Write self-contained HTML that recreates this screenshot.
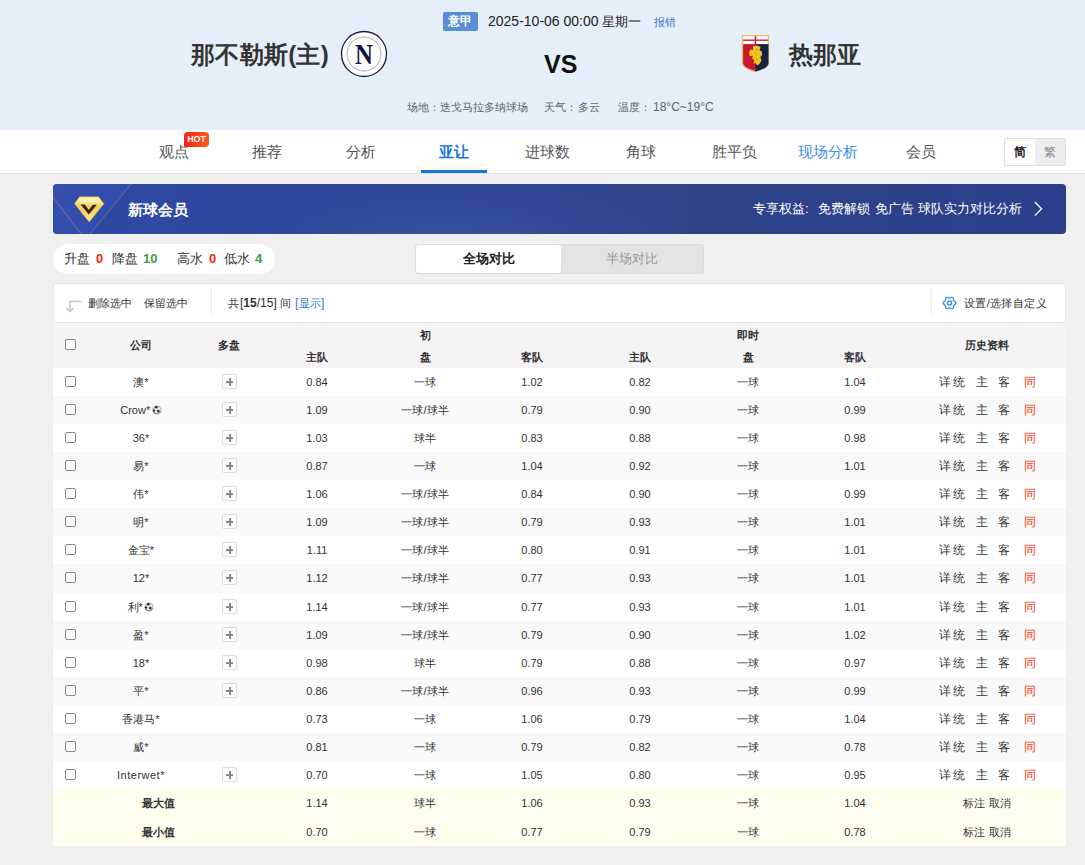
<!DOCTYPE html>
<html><head><meta charset="utf-8">
<style>
*{margin:0;padding:0;box-sizing:border-box}
html,body{width:1085px;height:865px;overflow:hidden;background:#f0f0f0;font-family:"Liberation Sans",sans-serif;color:#333;position:relative}
.abs{position:absolute;white-space:nowrap}
#hdr{position:absolute;left:0;top:0;width:1085px;height:130px;background:#e5eef9}
#nav{position:absolute;left:0;top:130px;width:1085px;height:44px;background:#fff;border-bottom:1px solid #e3e3e3}
.nv{position:absolute;top:0;width:100px;height:43px;line-height:43px;text-align:center;font-size:15px;color:#555}
.nv.act{color:#1677e0;font-weight:bold}
.nv.live{color:#3b8ee6}
#ul{position:absolute;left:421px;top:40px;width:66px;height:3px;background:#1677e0}
.hot{position:absolute;left:184px;top:2px;width:25px;height:15px;border-radius:4px 4px 4px 0;background:linear-gradient(90deg,#f3241b,#ff5a14);color:#fff;font-size:9px;font-weight:bold;line-height:15px;text-align:center;letter-spacing:-0.2px}
#lang{position:absolute;left:1004px;top:8px;width:62px;height:28px;border:1px solid #ddd;border-radius:2px;background:#eee;overflow:hidden}
#lang .s{position:absolute;left:0;top:0;width:30px;height:26px;background:#fff;color:#222;font-weight:bold;font-size:12px;line-height:26px;text-align:center}
#lang .t{position:absolute;left:30px;top:0;width:30px;height:26px;color:#888;font-size:12px;line-height:26px;text-align:center}
#vip{position:absolute;left:53px;top:184px;width:1013px;height:50px;border-radius:4px;background:radial-gradient(ellipse 220px 60px at 420px 60px,rgba(80,110,190,0.25),rgba(80,110,190,0) 100%),linear-gradient(90deg,#3049a5 0%,#2f4797 35%,#2d4389 65%,#2c3f8c 100%);overflow:hidden}
#stat{position:absolute;left:53px;top:244px;width:222px;height:30px;border-radius:15px;background:#fff;font-size:13px;line-height:30px;color:#333}
#stat .b{font-weight:bold}
#stat span{position:absolute;top:0}
.red{color:#f52a0c}
.grn{color:#3b9c3b}
#tog{position:absolute;left:415px;top:244px;width:289px;height:30px;border:1px solid #dcdcdc;border-radius:3px;background:#e3e3e3}
#tog .a{position:absolute;left:0;top:0;width:145px;height:28px;background:#fff;border-radius:3px;font-weight:bold;color:#222;font-size:13px;line-height:28px;text-align:center}
#tog .b{position:absolute;left:145px;top:0;width:142px;height:28px;color:#999;font-size:13px;line-height:28px;text-align:center}
#tool{position:absolute;left:53px;top:283px;width:1013px;height:40px;background:#fff;border:1px solid #e6e6e6;border-radius:3px;font-size:12px;color:#333}
#tool span{position:absolute;top:0;line-height:38px;white-space:nowrap;font-size:11px}
#thd{position:absolute;left:53px;top:323px;width:1013px;height:45px;background:#f4f4f4}
.th{position:absolute;width:120px;text-align:center;font-size:11.3px;font-weight:bold;color:#333;line-height:16px}
.row{position:absolute;left:53px;width:1013px;height:28px}
.c{position:absolute;width:120px;text-align:center;font-size:11px;line-height:16px;color:#333;white-space:nowrap}
.c.b{font-weight:bold}
.cb{position:absolute;width:11px;height:11px;border:1px solid #888;border-radius:2px;background:#fff}
.plus{position:absolute;width:15px;height:15px;border:1px solid #dcdcdc;border-radius:2px;background:#fff}
.plus:before{content:"";position:absolute;left:3px;top:6px;width:7px;height:2px;background:#8a8a8a}
.plus:after{content:"";position:absolute;left:5.5px;top:3px;width:2px;height:8px;background:#8a8a8a}
.hist{position:absolute;left:0;width:1085px;height:16px}
.hist span{position:absolute;top:0;font-size:12px;line-height:16px;color:#333}
.hist span.red{color:#f63a14}
.venue span{position:absolute;top:98px;font-size:11.3px;line-height:18px;color:#666;white-space:nowrap}
.vt span{position:absolute;top:16px;font-size:13px;line-height:18px;color:#fff;white-space:nowrap}
</style></head><body>
<div id="hdr">
  <div class="abs" style="left:443px;top:12px;width:35px;height:19px;background:#5a8dd6;color:#fff;font-size:12px;font-weight:bold;line-height:19px;text-align:center;border-radius:2px;padding-right:2px">意甲</div>
  <div class="abs" style="left:488px;top:12px;font-size:14px;line-height:19px;color:#222">2025-10-06 00:00 <span style="font-size:13px">星期一</span></div>
  <div class="abs" style="left:654px;top:13px;font-size:11px;line-height:19px;color:#3b78c7">报错</div>
  <div class="abs" style="left:191px;top:40px;font-size:24px;line-height:30px;font-weight:bold;color:#333;letter-spacing:0.3px">那不勒斯(主)</div>
  <svg class="abs" style="left:340px;top:30px" width="48" height="48" viewBox="0 0 48 48">
    <circle cx="24" cy="24" r="22.5" fill="#fff" stroke="#1c1d45" stroke-width="1.3"/>
    <circle cx="24" cy="24" r="17" fill="none" stroke="#a9aab5" stroke-width="1"/>
    <text x="0" y="0" transform="translate(24 33.6) scale(0.86 1)" text-anchor="middle" font-family="Liberation Serif" font-weight="bold" font-size="29" fill="#14153d">N</text>
  </svg>
  <div class="abs" style="left:544px;top:48px;font-size:25px;line-height:32px;font-weight:bold;color:#111">VS</div>
  <svg class="abs" style="left:741px;top:34px" width="29" height="39" viewBox="0 0 29 39">
    <path d="M1.5 1.5 H27.5 V29 Q27.5 34 14.5 37.5 Q1.5 34 1.5 29 Z" fill="#c8182f" stroke="#e2c15a" stroke-width="1.2"/>
    <path d="M14.5 10 H27.5 V29 Q27.5 34 14.5 37.5 Z" fill="#16223f"/>
    <rect x="2.1" y="2.1" width="24.8" height="8" fill="#fff"/>
    <rect x="13.7" y="2.1" width="1.6" height="8" fill="#d51f2a"/>
    <rect x="2.1" y="5.5" width="24.8" height="1.4" fill="#d51f2a"/>
    <path d="M12 12.2 L16.5 11.6 L19.6 13 L18.6 15.8 L20.8 17.8 L21.2 21 L19.2 23 L20.6 26.2 L18.6 29.8 L16 31.6 L14.8 29.2 L12.4 29.6 L13.4 26.2 L11 24.6 L12 21.6 L8.6 22.2 L8 18.2 L9.8 15.2 L12 16.2 Z" fill="#f2c51e"/><path d="M15 15 L17.5 16.5 M14 20 L17 21.5 M14.5 25 L17 26" stroke="#b8861a" stroke-width="0.7"/>
  </svg>
  <div class="abs" style="left:789px;top:40px;font-size:24px;line-height:30px;font-weight:bold;color:#333">热那亚</div>
  <div class="venue"><span style="left:407px">场地：</span><span style="left:440px">迭戈马拉多纳球场</span><span style="left:544px">天气：</span><span style="left:578px">多云</span><span style="left:618px">温度：</span><span style="left:653px;font-size:12px">18°C~19°C</span></div>
</div>
<div id="nav">
<div class="nv " style="left:124px">观点</div><div class="nv " style="left:217px">推荐</div><div class="nv " style="left:311px">分析</div><div class="nv act" style="left:404px">亚让</div><div class="nv " style="left:497px">进球数</div><div class="nv " style="left:591px">角球</div><div class="nv " style="left:684px">胜平负</div><div class="nv live" style="left:778px">现场分析</div><div class="nv " style="left:871px">会员</div>
<div class="hot">HOT</div>
<div id="ul"></div>
<div id="lang"><div class="s">简</div><div class="t">繁</div></div>
</div>
<div id="vip">
  <svg style="position:absolute;left:0;top:0" width="200" height="50" viewBox="0 0 200 50">
    <defs><linearGradient id="dg" x1="0" y1="0" x2="0" y2="1"><stop offset="0" stop-color="#fff3b8"/><stop offset="0.45" stop-color="#f7cf55"/><stop offset="1" stop-color="#fbe7a0"/></linearGradient></defs>
    <path d="M0 0 H78 L37 50 H0 Z" fill="#3553b6" opacity="0.55"/>
    <path d="M0 13 L28 50" stroke="#b56a88" stroke-width="1" opacity="0.8"/>
    <path d="M78 0 L37 50" stroke="#9c6a9a" stroke-width="1" opacity="0.8"/>
    <path d="M26.7 6.5 L21.7 19.8 L36.7 37.8 L50.7 19.8 L45.6 12.9 Z" fill="none"/>
    <path d="M26.5 12.9 H45.6 L50.7 19.8 L36.2 37.8 L21.7 19.8 Z" fill="url(#dg)" stroke="#f0c040" stroke-width="0.8" stroke-linejoin="round"/>
    <path d="M29 14 H43 L46 18.5 H26 Z" fill="#fff4c4" opacity="0.75"/><path d="M27.6 20.6 L31.8 20.6 L35.8 26 L39.8 20.8 L43.8 20.8 L35.8 30.4 Z" fill="#3b2210"/>
  </svg>
  <div class="abs" style="left:75px;top:16px;font-size:15px;font-weight:bold;color:#fff;line-height:20px">新球会员</div>
  <div class="vt"><span style="left:700px">专享权益</span><span style="left:752px">:</span><span style="left:765px">免费解锁</span><span style="left:822px">免广告</span><span style="left:865px">球队实力对比分析</span></div>
  <svg class="abs" style="left:980px;top:17px" width="11" height="16" viewBox="0 0 11 16"><path d="M1.8 1 L8.6 7.8 L1.8 14.6" fill="none" stroke="#fff" stroke-width="1.3"/></svg>
</div>
<div id="stat">
  <span style="left:11px">升盘</span><span class="red b" style="left:43px">0</span>
  <span style="left:59px">降盘</span><span class="grn b" style="left:90px">10</span>
  <span style="left:124px">高水</span><span class="red b" style="left:156px">0</span>
  <span style="left:171px">低水</span><span class="grn b" style="left:202px">4</span>
</div>
<div id="tog"><div class="a">全场对比</div><div class="b">半场对比</div></div>
<div id="tool">
  <svg style="position:absolute;left:11px;top:16px" width="18" height="13" viewBox="0 0 18 13"><path d="M16.5 1.5 H5 V11" fill="none" stroke="#c8c8c8" stroke-width="1.6"/><path d="M1.5 8 L5 11.5 L8.5 8" fill="none" stroke="#c8c8c8" stroke-width="1.6"/></svg>
  <span style="left:34px">删除选中</span>
  <span style="left:90px">保留选中</span>
  <div style="position:absolute;left:157px;top:5px;width:1px;height:25px;background:#ececec"></div>
  <span style="left:174px">共</span><span style="left:186px;font-size:12px">[<b>15</b>/15]</span><span style="left:226px">间</span><span style="left:241px;font-size:12px;color:#2f7fd6">[</span><span style="left:245px;color:#2f7fd6">显示</span><span style="left:267px;font-size:12px;color:#2f7fd6">]</span>
  <div style="position:absolute;left:877px;top:5px;width:1px;height:26px;background:#ececec"></div>
  <svg style="position:absolute;left:888px;top:12px" width="15" height="14" viewBox="0 0 15 14"><path d="M13.85 7.00 L13.73 7.54 L13.38 8.04 L12.91 8.45 L12.41 8.79 L11.99 9.09 L11.70 9.42 L11.56 9.84 L11.50 10.36 L11.46 10.96 L11.34 11.58 L11.08 12.12 L10.68 12.50 L10.14 12.66 L9.54 12.61 L8.95 12.41 L8.41 12.15 L7.93 11.93 L7.50 11.85 L7.07 11.93 L6.59 12.15 L6.05 12.41 L5.46 12.61 L4.86 12.66 L4.33 12.50 L3.92 12.12 L3.66 11.58 L3.54 10.96 L3.50 10.36 L3.44 9.84 L3.30 9.43 L3.01 9.09 L2.59 8.79 L2.09 8.45 L1.62 8.04 L1.27 7.54 L1.15 7.00 L1.27 6.46 L1.62 5.96 L2.09 5.55 L2.59 5.21 L3.01 4.91 L3.30 4.57 L3.44 4.16 L3.50 3.64 L3.54 3.04 L3.66 2.42 L3.92 1.88 L4.32 1.50 L4.86 1.34 L5.46 1.39 L6.05 1.59 L6.59 1.85 L7.07 2.07 L7.50 2.15 L7.93 2.07 L8.41 1.85 L8.95 1.59 L9.54 1.39 L10.14 1.34 L10.67 1.50 L11.08 1.88 L11.34 2.42 L11.46 3.04 L11.50 3.64 L11.56 4.16 L11.70 4.58 L11.99 4.91 L12.41 5.21 L12.91 5.55 L13.38 5.96 L13.73 6.46 L13.85 7.00 Z" fill="none" stroke="#3f95e6" stroke-width="1.4" stroke-linejoin="round"/><circle cx="7.5" cy="7" r="2" fill="none" stroke="#3f95e6" stroke-width="1.5"/></svg>
  <span style="left:910px;letter-spacing:0.35px">设置/选择自定义</span>
</div>
<div id="thd">
  <div class="cb" style="left:12px;top:16px"></div>
  <div class="th" style="left:28px;top:14px">公司</div>
  <div class="th" style="left:116px;top:14px">多盘</div>
  <div class="th" style="left:204px;top:26px">主队</div>
  <div class="th" style="left:312px;top:4px">初</div>
  <div class="th" style="left:312px;top:26px">盘</div>
  <div class="th" style="left:419px;top:26px">客队</div>
  <div class="th" style="left:527px;top:26px">主队</div>
  <div class="th" style="left:635px;top:4px">即时</div>
  <div class="th" style="left:635px;top:26px">盘</div>
  <div class="th" style="left:742px;top:26px">客队</div>
  <div class="th" style="left:874px;top:14px">历史资料</div>
</div>
<div class="row" style="top:368px;height:28px;background:#ffffff"></div>
<div class="cb" style="left:65px;top:376px"></div>
<div class="c " style="left:81px;top:374px;">澳*</div>
<div class="plus" style="left:222px;top:374px"></div>
<div class="c " style="left:257px;top:374px;">0.84</div>
<div class="c " style="left:365px;top:374px;">一球</div>
<div class="c " style="left:472px;top:374px;">1.02</div>
<div class="c " style="left:580px;top:374px;">0.82</div>
<div class="c " style="left:688px;top:374px;">一球</div>
<div class="c " style="left:795px;top:374px;">1.04</div>
<div class="hist" style="top:374px"><span style="left:939px">详</span><span style="left:953px">统</span><span style="left:976px">主</span><span style="left:998px">客</span><span class="red" style="left:1024px">同</span></div>
<div class="row" style="top:396px;height:28px;background:#f9f9f9"></div>
<div class="cb" style="left:65px;top:404px"></div>
<div class="c " style="left:81px;top:402px;">Crow*<svg width="10" height="10" viewBox="0 0 10 10" style="vertical-align:-1px;margin-left:1.5px"><circle cx="5" cy="5" r="4.5" fill="#a9b5b5"/><circle cx="5.3" cy="5.2" r="3.2" fill="#e6eeee"/><circle cx="4.3" cy="2.2" r="1.3" fill="#1e2222"/><circle cx="2" cy="5.6" r="1.2" fill="#1e2222"/><circle cx="6.3" cy="6.1" r="1.3" fill="#1e2222"/><path d="M1 7 Q5 10.5 9 6.5" stroke="#7d8a8a" stroke-width="1" fill="none"/></svg></div>
<div class="plus" style="left:222px;top:402px"></div>
<div class="c " style="left:257px;top:402px;">1.09</div>
<div class="c " style="left:365px;top:402px;">一球/球半</div>
<div class="c " style="left:472px;top:402px;">0.79</div>
<div class="c " style="left:580px;top:402px;">0.90</div>
<div class="c " style="left:688px;top:402px;">一球</div>
<div class="c " style="left:795px;top:402px;">0.99</div>
<div class="hist" style="top:402px"><span style="left:939px">详</span><span style="left:953px">统</span><span style="left:976px">主</span><span style="left:998px">客</span><span class="red" style="left:1024px">同</span></div>
<div class="row" style="top:424px;height:28px;background:#ffffff"></div>
<div class="cb" style="left:65px;top:432px"></div>
<div class="c " style="left:81px;top:430px;">36*</div>
<div class="plus" style="left:222px;top:430px"></div>
<div class="c " style="left:257px;top:430px;">1.03</div>
<div class="c " style="left:365px;top:430px;">球半</div>
<div class="c " style="left:472px;top:430px;">0.83</div>
<div class="c " style="left:580px;top:430px;">0.88</div>
<div class="c " style="left:688px;top:430px;">一球</div>
<div class="c " style="left:795px;top:430px;">0.98</div>
<div class="hist" style="top:430px"><span style="left:939px">详</span><span style="left:953px">统</span><span style="left:976px">主</span><span style="left:998px">客</span><span class="red" style="left:1024px">同</span></div>
<div class="row" style="top:452px;height:28px;background:#f9f9f9"></div>
<div class="cb" style="left:65px;top:460px"></div>
<div class="c " style="left:81px;top:458px;">易*</div>
<div class="plus" style="left:222px;top:458px"></div>
<div class="c " style="left:257px;top:458px;">0.87</div>
<div class="c " style="left:365px;top:458px;">一球</div>
<div class="c " style="left:472px;top:458px;">1.04</div>
<div class="c " style="left:580px;top:458px;">0.92</div>
<div class="c " style="left:688px;top:458px;">一球</div>
<div class="c " style="left:795px;top:458px;">1.01</div>
<div class="hist" style="top:458px"><span style="left:939px">详</span><span style="left:953px">统</span><span style="left:976px">主</span><span style="left:998px">客</span><span class="red" style="left:1024px">同</span></div>
<div class="row" style="top:480px;height:28px;background:#ffffff"></div>
<div class="cb" style="left:65px;top:488px"></div>
<div class="c " style="left:81px;top:486px;">伟*</div>
<div class="plus" style="left:222px;top:486px"></div>
<div class="c " style="left:257px;top:486px;">1.06</div>
<div class="c " style="left:365px;top:486px;">一球/球半</div>
<div class="c " style="left:472px;top:486px;">0.84</div>
<div class="c " style="left:580px;top:486px;">0.90</div>
<div class="c " style="left:688px;top:486px;">一球</div>
<div class="c " style="left:795px;top:486px;">0.99</div>
<div class="hist" style="top:486px"><span style="left:939px">详</span><span style="left:953px">统</span><span style="left:976px">主</span><span style="left:998px">客</span><span class="red" style="left:1024px">同</span></div>
<div class="row" style="top:508px;height:28px;background:#f9f9f9"></div>
<div class="cb" style="left:65px;top:516px"></div>
<div class="c " style="left:81px;top:514px;">明*</div>
<div class="plus" style="left:222px;top:514px"></div>
<div class="c " style="left:257px;top:514px;">1.09</div>
<div class="c " style="left:365px;top:514px;">一球/球半</div>
<div class="c " style="left:472px;top:514px;">0.79</div>
<div class="c " style="left:580px;top:514px;">0.93</div>
<div class="c " style="left:688px;top:514px;">一球</div>
<div class="c " style="left:795px;top:514px;">1.01</div>
<div class="hist" style="top:514px"><span style="left:939px">详</span><span style="left:953px">统</span><span style="left:976px">主</span><span style="left:998px">客</span><span class="red" style="left:1024px">同</span></div>
<div class="row" style="top:536px;height:28px;background:#ffffff"></div>
<div class="cb" style="left:65px;top:544px"></div>
<div class="c " style="left:81px;top:542px;">金宝*</div>
<div class="plus" style="left:222px;top:542px"></div>
<div class="c " style="left:257px;top:542px;">1.11</div>
<div class="c " style="left:365px;top:542px;">一球/球半</div>
<div class="c " style="left:472px;top:542px;">0.80</div>
<div class="c " style="left:580px;top:542px;">0.91</div>
<div class="c " style="left:688px;top:542px;">一球</div>
<div class="c " style="left:795px;top:542px;">1.01</div>
<div class="hist" style="top:542px"><span style="left:939px">详</span><span style="left:953px">统</span><span style="left:976px">主</span><span style="left:998px">客</span><span class="red" style="left:1024px">同</span></div>
<div class="row" style="top:564px;height:29px;background:#f9f9f9"></div>
<div class="cb" style="left:65px;top:572px"></div>
<div class="c " style="left:81px;top:570px;">12*</div>
<div class="plus" style="left:222px;top:570px"></div>
<div class="c " style="left:257px;top:570px;">1.12</div>
<div class="c " style="left:365px;top:570px;">一球/球半</div>
<div class="c " style="left:472px;top:570px;">0.77</div>
<div class="c " style="left:580px;top:570px;">0.93</div>
<div class="c " style="left:688px;top:570px;">一球</div>
<div class="c " style="left:795px;top:570px;">1.01</div>
<div class="hist" style="top:570px"><span style="left:939px">详</span><span style="left:953px">统</span><span style="left:976px">主</span><span style="left:998px">客</span><span class="red" style="left:1024px">同</span></div>
<div class="row" style="top:593px;height:28px;background:#ffffff"></div>
<div class="cb" style="left:65px;top:601px"></div>
<div class="c " style="left:81px;top:599px;">利*<svg width="10" height="10" viewBox="0 0 10 10" style="vertical-align:-1px;margin-left:1.5px"><circle cx="5" cy="5" r="4.5" fill="#a9b5b5"/><circle cx="5.3" cy="5.2" r="3.2" fill="#e6eeee"/><circle cx="4.3" cy="2.2" r="1.3" fill="#1e2222"/><circle cx="2" cy="5.6" r="1.2" fill="#1e2222"/><circle cx="6.3" cy="6.1" r="1.3" fill="#1e2222"/><path d="M1 7 Q5 10.5 9 6.5" stroke="#7d8a8a" stroke-width="1" fill="none"/></svg></div>
<div class="plus" style="left:222px;top:599px"></div>
<div class="c " style="left:257px;top:599px;">1.14</div>
<div class="c " style="left:365px;top:599px;">一球/球半</div>
<div class="c " style="left:472px;top:599px;">0.77</div>
<div class="c " style="left:580px;top:599px;">0.93</div>
<div class="c " style="left:688px;top:599px;">一球</div>
<div class="c " style="left:795px;top:599px;">1.01</div>
<div class="hist" style="top:599px"><span style="left:939px">详</span><span style="left:953px">统</span><span style="left:976px">主</span><span style="left:998px">客</span><span class="red" style="left:1024px">同</span></div>
<div class="row" style="top:621px;height:28px;background:#f9f9f9"></div>
<div class="cb" style="left:65px;top:629px"></div>
<div class="c " style="left:81px;top:627px;">盈*</div>
<div class="plus" style="left:222px;top:627px"></div>
<div class="c " style="left:257px;top:627px;">1.09</div>
<div class="c " style="left:365px;top:627px;">一球/球半</div>
<div class="c " style="left:472px;top:627px;">0.79</div>
<div class="c " style="left:580px;top:627px;">0.90</div>
<div class="c " style="left:688px;top:627px;">一球</div>
<div class="c " style="left:795px;top:627px;">1.02</div>
<div class="hist" style="top:627px"><span style="left:939px">详</span><span style="left:953px">统</span><span style="left:976px">主</span><span style="left:998px">客</span><span class="red" style="left:1024px">同</span></div>
<div class="row" style="top:649px;height:28px;background:#ffffff"></div>
<div class="cb" style="left:65px;top:657px"></div>
<div class="c " style="left:81px;top:655px;">18*</div>
<div class="plus" style="left:222px;top:655px"></div>
<div class="c " style="left:257px;top:655px;">0.98</div>
<div class="c " style="left:365px;top:655px;">球半</div>
<div class="c " style="left:472px;top:655px;">0.79</div>
<div class="c " style="left:580px;top:655px;">0.88</div>
<div class="c " style="left:688px;top:655px;">一球</div>
<div class="c " style="left:795px;top:655px;">0.97</div>
<div class="hist" style="top:655px"><span style="left:939px">详</span><span style="left:953px">统</span><span style="left:976px">主</span><span style="left:998px">客</span><span class="red" style="left:1024px">同</span></div>
<div class="row" style="top:677px;height:28px;background:#f9f9f9"></div>
<div class="cb" style="left:65px;top:685px"></div>
<div class="c " style="left:81px;top:683px;">平*</div>
<div class="plus" style="left:222px;top:683px"></div>
<div class="c " style="left:257px;top:683px;">0.86</div>
<div class="c " style="left:365px;top:683px;">一球/球半</div>
<div class="c " style="left:472px;top:683px;">0.96</div>
<div class="c " style="left:580px;top:683px;">0.93</div>
<div class="c " style="left:688px;top:683px;">一球</div>
<div class="c " style="left:795px;top:683px;">0.99</div>
<div class="hist" style="top:683px"><span style="left:939px">详</span><span style="left:953px">统</span><span style="left:976px">主</span><span style="left:998px">客</span><span class="red" style="left:1024px">同</span></div>
<div class="row" style="top:705px;height:28px;background:#ffffff"></div>
<div class="cb" style="left:65px;top:713px"></div>
<div class="c " style="left:81px;top:711px;">香港马*</div>
<div class="c " style="left:257px;top:711px;">0.73</div>
<div class="c " style="left:365px;top:711px;">一球</div>
<div class="c " style="left:472px;top:711px;">1.06</div>
<div class="c " style="left:580px;top:711px;">0.79</div>
<div class="c " style="left:688px;top:711px;">一球</div>
<div class="c " style="left:795px;top:711px;">1.04</div>
<div class="hist" style="top:711px"><span style="left:939px">详</span><span style="left:953px">统</span><span style="left:976px">主</span><span style="left:998px">客</span><span class="red" style="left:1024px">同</span></div>
<div class="row" style="top:733px;height:28px;background:#f9f9f9"></div>
<div class="cb" style="left:65px;top:741px"></div>
<div class="c " style="left:81px;top:739px;">威*</div>
<div class="c " style="left:257px;top:739px;">0.81</div>
<div class="c " style="left:365px;top:739px;">一球</div>
<div class="c " style="left:472px;top:739px;">0.79</div>
<div class="c " style="left:580px;top:739px;">0.82</div>
<div class="c " style="left:688px;top:739px;">一球</div>
<div class="c " style="left:795px;top:739px;">0.78</div>
<div class="hist" style="top:739px"><span style="left:939px">详</span><span style="left:953px">统</span><span style="left:976px">主</span><span style="left:998px">客</span><span class="red" style="left:1024px">同</span></div>
<div class="row" style="top:761px;height:27px;background:#ffffff"></div>
<div class="cb" style="left:65px;top:769px"></div>
<div class="c " style="left:81px;top:767px;"><span style="letter-spacing:0.5px">Interwet*</span></div>
<div class="plus" style="left:222px;top:767px"></div>
<div class="c " style="left:257px;top:767px;">0.70</div>
<div class="c " style="left:365px;top:767px;">一球</div>
<div class="c " style="left:472px;top:767px;">1.05</div>
<div class="c " style="left:580px;top:767px;">0.80</div>
<div class="c " style="left:688px;top:767px;">一球</div>
<div class="c " style="left:795px;top:767px;">0.95</div>
<div class="hist" style="top:767px"><span style="left:939px">详</span><span style="left:953px">统</span><span style="left:976px">主</span><span style="left:998px">客</span><span class="red" style="left:1024px">同</span></div>
<div class="row" style="top:788px;height:29px;background:#fdfeee"></div>
<div class="c b" style="left:98px;top:795px;">最大值</div>
<div class="c " style="left:257px;top:795px;">1.14</div>
<div class="c " style="left:365px;top:795px;">球半</div>
<div class="c " style="left:472px;top:795px;">1.06</div>
<div class="c " style="left:580px;top:795px;">0.93</div>
<div class="c " style="left:688px;top:795px;">一球</div>
<div class="c " style="left:795px;top:795px;">1.04</div>
<div class="c " style="left:927px;top:795px;">标注 取消</div>
<div class="row" style="top:817px;height:29px;background:#fdfeee"></div>
<div class="c b" style="left:98px;top:824px;">最小值</div>
<div class="c " style="left:257px;top:824px;">0.70</div>
<div class="c " style="left:365px;top:824px;">一球</div>
<div class="c " style="left:472px;top:824px;">0.77</div>
<div class="c " style="left:580px;top:824px;">0.79</div>
<div class="c " style="left:688px;top:824px;">一球</div>
<div class="c " style="left:795px;top:824px;">0.78</div>
<div class="c " style="left:927px;top:824px;">标注 取消</div>
</body></html>
